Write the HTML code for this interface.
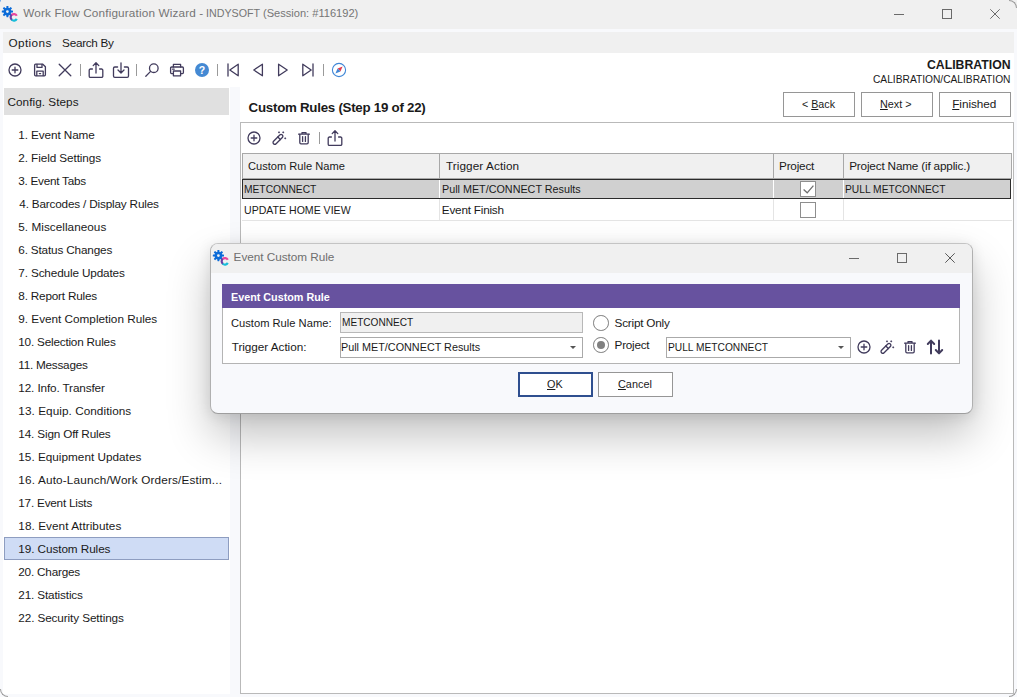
<!DOCTYPE html>
<html lang="en"><head><meta charset="utf-8"><title>Work Flow Configuration Wizard - INDYSOFT</title>
<style>
html,body{margin:0;padding:0}
body{width:1017px;height:697px;position:relative;overflow:hidden;background:#f8f9fc;font-family:"Liberation Sans",sans-serif;color:#1a1a1a}
.g{position:absolute;left:0;top:0;width:0;height:0}
.t{position:absolute;height:20px;line-height:20px;white-space:nowrap;transform-origin:0 0}
.t u{text-decoration:underline;text-underline-offset:1px}
.ic{position:absolute;overflow:visible}
.titlebar{position:absolute;left:0;top:0;width:1017px;height:29px;background:#f0f0f0}
.corner-art{position:absolute;left:-6px;top:-8px;width:7px;height:12px;border-radius:50%;background:#3f8fe8}
.menubar{position:absolute;left:3px;top:32px;width:1011px;height:21px;background:#f0f0f0}
.client{position:absolute;left:3px;top:53px;width:1011px;height:641px;background:#fff}
.crn{position:absolute;width:8px;height:8px;box-sizing:border-box;border:0 solid #9c9c9c}
.crn.tr{right:0;top:0;border-top-width:1px;border-right-width:1px;border-top-right-radius:8px}
.crn.bl{left:0;bottom:0;border-bottom-width:1px;border-left-width:1px;border-bottom-left-radius:8px}
.crn.br{right:0;bottom:0;border-bottom-width:1px;border-right-width:1px;border-bottom-right-radius:8px}
.sep{position:absolute;width:1px;height:12px;background:#9a9a9a}
.cfg{position:absolute;left:4px;top:88px;width:225px;height:27px;background:#e0e0e0}
.sel{position:absolute;left:4px;top:537px;width:225px;height:23px;box-sizing:border-box;background:#cfdcf5;border:1px solid #8e9dc0}
.split{position:absolute;left:230px;top:87px;width:10px;height:607px;background:#f8f9fc}
.btn{position:absolute;box-sizing:border-box;background:#fff;border:1px solid #969696}
.btn.ok{border:2px solid #2f4f8f}
.panel{position:absolute;left:240px;top:122px;width:774px;height:572px;box-sizing:border-box;background:#fff;border:1px solid #b9b9b9}
.ghead{position:absolute;left:242px;top:153px;width:770px;height:26px;box-sizing:border-box;background:#f0f0f0;border:1px solid #a8a8a8}
.gsep{position:absolute;top:154px;width:1px;height:24px;background:#a8a8a8}
.row1{position:absolute;left:242px;top:179px;width:769px;height:20px;background:#d0d0d0}
.row1b{position:absolute;left:242px;top:179px;width:769px;height:20px;box-sizing:border-box;border:1px solid #2b2b2b}
.row2{position:absolute;left:242px;top:199px;width:770px;height:22px;box-sizing:border-box;border-bottom:1px solid #e4e4e4;background:#fff}
.csep{position:absolute;width:1px;background:#e4e4e4}
.chk{position:absolute;width:15.6px;height:15.4px;box-sizing:border-box;border:1.2px solid #8e8e8e;background:#fff}
.chk svg{position:absolute;left:0;top:0}
.dlg{position:absolute;left:210px;top:243px;width:763px;height:171px;box-sizing:border-box;border-radius:8px;background:#f8f9fc;border:1px solid #b0b0b0;border-top-color:#c4c4c4;border-bottom-color:#9e9e9e;box-shadow:0 22px 44px rgba(0,0,0,.24),0 2px 14px rgba(0,0,0,.10);overflow:hidden}
.dtitle{position:absolute;left:0;top:0;width:100%;height:29px;background:#f0f0f0}
.dbox{position:absolute;left:222px;top:284px;width:738px;height:80px;box-sizing:border-box;background:#fff;border:1px solid #b4b4b4}
.dhead{position:absolute;left:222px;top:284px;width:738px;height:24px;background:#67529f}
.inp{position:absolute;height:21px;box-sizing:border-box;background:#fff;border:1px solid #aaa}
.inp.dis{background:#f0f0f0;border-color:#b8b8b8}
.dd{position:absolute;width:0;height:0;border-left:3.5px solid transparent;border-right:3.5px solid transparent;border-top:3.5px solid #555}
.radio{position:absolute;width:15.6px;height:15.6px;box-sizing:border-box;border:1px solid #7d7d7d;border-radius:50%;background:#fff}
.radio i{position:absolute;left:2.6px;top:2.6px;width:8.4px;height:8.4px;border-radius:50%;background:#808080}
</style></head>
<body>
<div class="g window-titlebar">
<div class="titlebar"></div>
<div class="corner-art"></div>
<svg class="ic" style="left:1px;top:2px" width="17" height="22" viewBox="0 0 17 22"><g transform="translate(6.4,9.6)" fill="#0b6bd8"><rect x="-1" y="-5.6" width="2" height="2.4" rx=".4" transform="rotate(0)"/><rect x="-1" y="-5.6" width="2" height="2.4" rx=".4" transform="rotate(45)"/><rect x="-1" y="-5.6" width="2" height="2.4" rx=".4" transform="rotate(90)"/><rect x="-1" y="-5.6" width="2" height="2.4" rx=".4" transform="rotate(135)"/><rect x="-1" y="-5.6" width="2" height="2.4" rx=".4" transform="rotate(180)"/><rect x="-1" y="-5.6" width="2" height="2.4" rx=".4" transform="rotate(225)"/><rect x="-1" y="-5.6" width="2" height="2.4" rx=".4" transform="rotate(270)"/><rect x="-1" y="-5.6" width="2" height="2.4" rx=".4" transform="rotate(315)"/><path d="M0-3.9a3.9 3.9 0 1 0 0 7.8a3.9 3.9 0 1 0 0-7.8zM0-1.4a1.4 1.4 0 1 1 0 2.8a1.4 1.4 0 1 1 0-2.8z" fill-rule="evenodd"/></g><g fill="none" stroke-width="2.2"><path d="M11.04 12.69A3.25 3.25 0 0 0 11.04 18.01" stroke="#6a3fa5"/><path d="M15.77 13.82A3.25 3.25 0 0 0 10.73 12.93" stroke="#e9479c"/><path d="M10.73 17.77A3.25 3.25 0 0 0 15.77 16.88" stroke="#19bdd9"/></g></svg>
<span class="t" style="left:23.2px;top:2.9px;font-size:11.75px;color:#757575;letter-spacing:0.15px;">Work Flow Configuration Wizard -</span><span class="t" style="left:205.8px;top:2.9px;font-size:11.75px;color:#757575;transform:scaleX(0.910);">INDYSOFT</span><span class="t" style="left:263.3px;top:2.9px;font-size:11.75px;color:#757575;transform:scaleX(0.943);">(Session: #116192)</span>
<svg class="ic" style="left:894px;top:8.5px" width="10" height="10" viewBox="0 0 10 10"><path d="M0 5.5h10" stroke="#6a6a6a" fill="none"/></svg>
<svg class="ic" style="left:942px;top:9px" width="10" height="10" viewBox="0 0 10 10"><rect x="0.5" y="0.5" width="9" height="9" stroke="#6a6a6a" fill="none"/></svg>
<svg class="ic" style="left:990px;top:9px" width="10" height="10" viewBox="0 0 10 10"><path d="M0.3 0.3l9.4 9.4M9.7 0.3l-9.4 9.4" stroke="#6a6a6a" fill="none" stroke-width="1"/></svg>
</div>
<div class="g menu" role="menubar">
<div class="menubar"></div><span class="t" style="left:8.4px;top:32.9px;font-size:11.75px;letter-spacing:0.42px;">Options</span><span class="t" style="left:62.1px;top:32.9px;font-size:11.75px;letter-spacing:-0.29px;">Search By</span>
</div>
<div class="client"></div>
<div class="crn tr"></div><div class="crn bl"></div><div class="crn br"></div>
<div class="g main-toolbar" role="toolbar">
<svg class="ic" style="left:7.2px;top:62px" width="16" height="16" viewBox="0 0 16 16"><g fill="none" stroke="#413b5c" stroke-width="1.3" stroke-linecap="round" stroke-linejoin="round"><circle cx="8" cy="8" r="6"/><path d="M8 5.2v5.6M5.2 8h5.6"/></g></svg><svg class="ic" style="left:32px;top:62px" width="16" height="16" viewBox="0 0 16 16"><g fill="none" stroke="#413b5c" stroke-width="1.3" stroke-linecap="round" stroke-linejoin="round"><path d="M2.6 3.2a1 1 0 0 1 1-1h7.2l2.6 2.6v8a1 1 0 0 1-1 1H3.6a1 1 0 0 1-1-1z"/><path d="M5 2.4v3h5v-3M4.8 13.6V9.2h6.4v4.4"/><path d="M7.4 11.6h1.2"/></g></svg><svg class="ic" style="left:57px;top:62px" width="16" height="16" viewBox="0 0 16 16"><g fill="none" stroke="#413b5c" stroke-width="1.3" stroke-linecap="round" stroke-linejoin="round"><path d="M2.2 2.2l11.6 11.6M13.8 2.2L2.2 13.8"/></g></svg><div class="sep" style="left:80px;top:64px"></div><svg class="ic" style="left:87px;top:60.5px" width="18" height="18" viewBox="0 0 18 18"><g fill="none" stroke="#413b5c" stroke-width="1.3" stroke-linecap="round" stroke-linejoin="round" stroke-width="1.4"><path d="M5.4 8H3.4a1.2 1.2 0 0 0-1.2 1.2v6a1.2 1.2 0 0 0 1.2 1.2h11.2a1.2 1.2 0 0 0 1.2-1.2v-6a1.2 1.2 0 0 0-1.2-1.2h-2"/><path d="M9 12V2M6.2 4.6L9 1.8l2.8 2.8"/></g></svg><svg class="ic" style="left:112px;top:60.5px" width="18" height="18" viewBox="0 0 18 18"><g fill="none" stroke="#413b5c" stroke-width="1.3" stroke-linecap="round" stroke-linejoin="round" stroke-width="1.4"><path d="M5.6 6H2.8a1.3 1.3 0 0 0-1.3 1.3v7.8a1.3 1.3 0 0 0 1.3 1.3h12.4a1.3 1.3 0 0 0 1.3-1.3V7.3a1.3 1.3 0 0 0-1.3-1.3h-2.8"/><path d="M9 1.8V11.6M6 9l3 3 3-3"/></g></svg><div class="sep" style="left:136px;top:64px"></div><svg class="ic" style="left:144px;top:62px" width="16" height="16" viewBox="0 0 16 16"><g fill="none" stroke="#413b5c" stroke-width="1.3" stroke-linecap="round" stroke-linejoin="round" stroke-width="1.4"><circle cx="9.8" cy="6.2" r="4.3"/><path d="M6.6 9.4L1.8 14.2"/></g></svg><svg class="ic" style="left:169px;top:62px" width="16" height="16" viewBox="0 0 16 16"><g fill="none" stroke="#413b5c" stroke-width="1.3" stroke-linecap="round" stroke-linejoin="round"><path d="M4.4 5V2.4h7.2V5"/><path d="M4.2 11.6H2.6a1 1 0 0 1-1-1V6a1 1 0 0 1 1-1h10.8a1 1 0 0 1 1 1v4.6a1 1 0 0 1-1 1h-1.6"/><path d="M4.4 9h7.2v4.8H4.4zM3.6 7.2h1.6"/></g></svg><svg class="ic" style="left:194px;top:62px" width="16" height="16" viewBox="0 0 16 16"><circle cx="8" cy="8" r="7" fill="#4489d3"/><text x="8" y="12" text-anchor="middle" font-family="Liberation Sans, sans-serif" font-size="10.5" font-weight="700" fill="#fff">?</text></svg><div class="sep" style="left:217px;top:64px"></div><svg class="ic" style="left:225px;top:62px" width="16" height="16" viewBox="0 0 16 16"><g fill="none" stroke="#413b5c" stroke-width="1.3" stroke-linecap="round" stroke-linejoin="round" stroke-width="1.4"><path d="M3 2v12"/><path d="M13.2 2.2v11.6L4.8 8z"/></g></svg><svg class="ic" style="left:250px;top:62px" width="16" height="16" viewBox="0 0 16 16"><g fill="none" stroke="#413b5c" stroke-width="1.3" stroke-linecap="round" stroke-linejoin="round" stroke-width="1.4"><path d="M12.4 2.2v11.6L3.8 8z"/></g></svg><svg class="ic" style="left:275px;top:62px" width="16" height="16" viewBox="0 0 16 16"><g fill="none" stroke="#413b5c" stroke-width="1.3" stroke-linecap="round" stroke-linejoin="round" stroke-width="1.4"><path d="M3.6 2.2v11.6L12.2 8z"/></g></svg><svg class="ic" style="left:300px;top:62px" width="16" height="16" viewBox="0 0 16 16"><g fill="none" stroke="#413b5c" stroke-width="1.3" stroke-linecap="round" stroke-linejoin="round" stroke-width="1.4"><path d="M13 2v12"/><path d="M2.8 2.2v11.6L11.2 8z"/></g></svg><div class="sep" style="left:323px;top:64px"></div><svg class="ic" style="left:331px;top:62px" width="16" height="16" viewBox="0 0 16 16"><circle cx="8" cy="8" r="6.6" fill="#fff" stroke="#3f86d6" stroke-width="1.1"/><path d="M11.6 4.4L6.6 6.6 9.4 9.4z" fill="#e03a4e"/><path d="M4.4 11.6l5-2.2L6.6 6.6z" fill="#3f86d6"/></svg>
</div>
<div class="g context-label">
<span class="t" style="left:927.3px;top:54.8px;font-size:13.33px;font-weight:700;transform:scaleX(0.920);">CALIBRATION</span><span class="t" style="left:872.7px;top:68.9px;font-size:11.75px;transform:scaleX(0.869);">CALIBRATION/CALIBRATION</span>
</div>
<div class="g sidebar" role="navigation">
<div class="cfg"></div><span class="t" style="left:7.5px;top:91.6px;font-size:11.75px;letter-spacing:0.04px;">Config. Steps</span>
<div class="sel"></div>
<span class="t" style="left:18.3px;top:125.0px;font-size:11.75px;letter-spacing:-0.10px;">1. Event Name</span>
<span class="t" style="left:18.3px;top:148.0px;font-size:11.75px;letter-spacing:-0.09px;">2. Field Settings</span>
<span class="t" style="left:18.3px;top:171.0px;font-size:11.75px;letter-spacing:-0.27px;">3. Event Tabs</span>
<span class="t" style="left:19.3px;top:194.0px;font-size:11.75px;letter-spacing:-0.18px;">4. Barcodes / Display Rules</span>
<span class="t" style="left:18.3px;top:217.0px;font-size:11.75px;letter-spacing:0.03px;">5. Miscellaneous</span>
<span class="t" style="left:18.3px;top:240.0px;font-size:11.75px;letter-spacing:-0.17px;">6. Status Changes</span>
<span class="t" style="left:18.3px;top:263.0px;font-size:11.75px;letter-spacing:-0.14px;">7. Schedule Updates</span>
<span class="t" style="left:18.3px;top:286.0px;font-size:11.75px;letter-spacing:-0.20px;">8. Report Rules</span>
<span class="t" style="left:18.3px;top:309.0px;font-size:11.75px;letter-spacing:-0.01px;">9. Event Completion Rules</span>
<span class="t" style="left:18.3px;top:332.0px;font-size:11.75px;letter-spacing:-0.21px;">10. Selection Rules</span>
<span class="t" style="left:18.3px;top:355.0px;font-size:11.75px;letter-spacing:-0.25px;">11. Messages</span>
<span class="t" style="left:18.3px;top:378.0px;font-size:11.75px;letter-spacing:-0.13px;">12. Info. Transfer</span>
<span class="t" style="left:18.3px;top:401.0px;font-size:11.75px;letter-spacing:0.06px;">13. Equip. Conditions</span>
<span class="t" style="left:18.3px;top:424.0px;font-size:11.75px;letter-spacing:-0.16px;">14. Sign Off Rules</span>
<span class="t" style="left:18.3px;top:447.0px;font-size:11.75px;letter-spacing:0.01px;">15. Equipment Updates</span>
<span class="t" style="left:18.3px;top:470.0px;font-size:11.75px;letter-spacing:0.17px;">16. Auto-Launch/Work Orders/Estim...</span>
<span class="t" style="left:18.3px;top:493.0px;font-size:11.75px;letter-spacing:-0.22px;">17. Event Lists</span>
<span class="t" style="left:18.3px;top:516.0px;font-size:11.75px;letter-spacing:0.06px;">18. Event Attributes</span>
<span class="t" style="left:18.3px;top:539.0px;font-size:11.75px;letter-spacing:-0.08px;">19. Custom Rules</span>
<span class="t" style="left:18.3px;top:562.0px;font-size:11.75px;letter-spacing:-0.21px;">20. Charges</span>
<span class="t" style="left:18.3px;top:585.0px;font-size:11.75px;letter-spacing:-0.15px;">21. Statistics</span>
<span class="t" style="left:18.3px;top:608.0px;font-size:11.75px;letter-spacing:-0.11px;">22. Security Settings</span>
</div>
<div class="split"></div>
<div class="g step-panel" role="main">
<span class="t" style="left:248.6px;top:97.8px;font-size:13.33px;font-weight:700;letter-spacing:-0.27px;">Custom Rules (Step 19 of 22)</span>
<div class="btn" style="left:783px;top:92px;width:72px;height:25px"></div><span class="t" style="left:802.3px;top:94.0px;font-size:11.75px;transform:scaleX(0.910);">&lt; <u>B</u>ack</span>
<div class="btn" style="left:861px;top:92px;width:72px;height:25px"></div><span class="t" style="left:879.8px;top:94.0px;font-size:11.75px;transform:scaleX(0.922);"><u>N</u>ext &gt;</span>
<div class="btn" style="left:939px;top:92px;width:72px;height:25px"></div><span class="t" style="left:952.2px;top:94.0px;font-size:11.75px;letter-spacing:-0.03px;"><u>F</u>inished</span>
<div class="panel"></div>
<svg class="ic" style="left:246px;top:130px" width="16" height="16" viewBox="0 0 16 16"><g fill="none" stroke="#413b5c" stroke-width="1.3" stroke-linecap="round" stroke-linejoin="round"><circle cx="8" cy="8" r="6"/><path d="M8 5.2v5.6M5.2 8h5.6"/></g></svg><svg class="ic" style="left:270.6px;top:130px" width="16" height="16" viewBox="0 0 16 16"><g fill="none" stroke="#413b5c" stroke-width="1.3" stroke-linecap="round" stroke-linejoin="round"><g transform="translate(6.95,9.35) rotate(45)"><rect x="-1.8" y="-6.2" width="3.6" height="12.4" rx="1.8"/><path d="M-1.8 -1.6h3.6"/></g></g><g fill="#413b5c"><path d="M8.0 1.15l1.15 1.15-1.15 1.15-1.15-1.15z"/><path d="M12.2 1.15l1.15 1.15-1.15 1.15-1.15-1.15z"/><path d="M14.2 7.15l1.15 1.15-1.15 1.15-1.15-1.15z"/></g></svg><svg class="ic" style="left:296px;top:130px" width="16" height="16" viewBox="0 0 16 16"><g fill="none" stroke="#413b5c" stroke-width="1.3" stroke-linecap="round" stroke-linejoin="round" stroke-width="1.45"><path d="M2.6 4.2h10.8M6 4V2.6h4V4"/><path d="M3.8 4.4v8.2a1.2 1.2 0 0 0 1.2 1.2h6a1.2 1.2 0 0 0 1.2-1.2V4.4"/><path d="M6.6 6.6v4.8M9.4 6.6v4.8"/></g></svg><div class="sep" style="left:319px;top:132px"></div><svg class="ic" style="left:326px;top:128.5px" width="18" height="18" viewBox="0 0 18 18"><g fill="none" stroke="#413b5c" stroke-width="1.3" stroke-linecap="round" stroke-linejoin="round" stroke-width="1.4"><path d="M5.4 8H3.4a1.2 1.2 0 0 0-1.2 1.2v6a1.2 1.2 0 0 0 1.2 1.2h11.2a1.2 1.2 0 0 0 1.2-1.2v-6a1.2 1.2 0 0 0-1.2-1.2h-2"/><path d="M9 12V2M6.2 4.6L9 1.8l2.8 2.8"/></g></svg>
<div class="ghead"></div>
<div class="gsep" style="left:439px"></div>
<div class="gsep" style="left:773px"></div>
<div class="gsep" style="left:843px"></div>
<span class="t" style="left:248.4px;top:156.0px;font-size:11.75px;transform:scaleX(0.945);">Custom Rule Name</span><span class="t" style="left:445.9px;top:156.0px;font-size:11.75px;letter-spacing:0.09px;">Trigger Action</span><span class="t" style="left:779.0px;top:156.0px;font-size:11.75px;letter-spacing:-0.20px;">Project</span><span class="t" style="left:849.2px;top:156.0px;font-size:11.75px;letter-spacing:-0.18px;">Project Name (if applic.)</span>
<div class="row1"></div><div class="row2"></div>
<div class="csep" style="left:439px;top:179px;height:20px;background:#fff"></div><div class="csep" style="left:439px;top:199px;height:21px"></div>
<div class="csep" style="left:773px;top:179px;height:20px;background:#fff"></div><div class="csep" style="left:773px;top:199px;height:21px"></div>
<div class="csep" style="left:843px;top:179px;height:20px;background:#fff"></div><div class="csep" style="left:843px;top:199px;height:21px"></div>
<div class="row1b"></div>
<span class="t" style="left:243.5px;top:179.0px;font-size:11.75px;transform:scaleX(0.872);">METCONNECT</span><span class="t" style="left:441.8px;top:179.0px;font-size:11.75px;transform:scaleX(0.917);">Pull MET/CONNECT Results</span><span class="t" style="left:845.4px;top:179.0px;font-size:11.75px;transform:scaleX(0.872);">PULL METCONNECT</span><span class="t" style="left:243.5px;top:200.0px;font-size:11.75px;transform:scaleX(0.899);">UPDATE HOME VIEW</span><span class="t" style="left:441.8px;top:200.0px;font-size:11.75px;letter-spacing:-0.22px;">Event Finish</span>
<div class="chk" style="left:800.3px;top:181.4px"><svg width="15" height="15" viewBox="0 0 15 15"><path d="M2.6 7.6l3.6 3.2 6.2-7.2" fill="none" stroke="#6e6e6e" stroke-width="1.3"/></svg></div><div class="chk" style="left:800.3px;top:202.2px"></div>
</div>
<div class="g dialog" role="dialog">
<div class="dlg"><div class="dtitle"></div></div>
<svg class="ic" style="left:212.1px;top:246.2px" width="17" height="22" viewBox="0 0 17 22"><g transform="translate(6.4,9.6)" fill="#0b6bd8"><rect x="-1" y="-5.6" width="2" height="2.4" rx=".4" transform="rotate(0)"/><rect x="-1" y="-5.6" width="2" height="2.4" rx=".4" transform="rotate(45)"/><rect x="-1" y="-5.6" width="2" height="2.4" rx=".4" transform="rotate(90)"/><rect x="-1" y="-5.6" width="2" height="2.4" rx=".4" transform="rotate(135)"/><rect x="-1" y="-5.6" width="2" height="2.4" rx=".4" transform="rotate(180)"/><rect x="-1" y="-5.6" width="2" height="2.4" rx=".4" transform="rotate(225)"/><rect x="-1" y="-5.6" width="2" height="2.4" rx=".4" transform="rotate(270)"/><rect x="-1" y="-5.6" width="2" height="2.4" rx=".4" transform="rotate(315)"/><path d="M0-3.9a3.9 3.9 0 1 0 0 7.8a3.9 3.9 0 1 0 0-7.8zM0-1.4a1.4 1.4 0 1 1 0 2.8a1.4 1.4 0 1 1 0-2.8z" fill-rule="evenodd"/></g><g fill="none" stroke-width="2.2"><path d="M11.04 12.69A3.25 3.25 0 0 0 11.04 18.01" stroke="#6a3fa5"/><path d="M15.77 13.82A3.25 3.25 0 0 0 10.73 12.93" stroke="#e9479c"/><path d="M10.73 17.77A3.25 3.25 0 0 0 15.77 16.88" stroke="#19bdd9"/></g></svg><span class="t" style="left:233.6px;top:247.0px;font-size:11.75px;color:#6e6e6e;letter-spacing:-0.03px;">Event Custom Rule</span>
<svg class="ic" style="left:849px;top:252.5px" width="10" height="10" viewBox="0 0 10 10"><path d="M0 5.5h10" stroke="#6a6a6a" fill="none"/></svg><svg class="ic" style="left:897px;top:253px" width="10" height="10" viewBox="0 0 10 10"><rect x="0.5" y="0.5" width="9" height="9" stroke="#6a6a6a" fill="none"/></svg><svg class="ic" style="left:945px;top:253px" width="10" height="10" viewBox="0 0 10 10"><path d="M0.3 0.3l9.4 9.4M9.7 0.3l-9.4 9.4" stroke="#5a5a5a" fill="none" stroke-width="1"/></svg>
<div class="dbox"></div><div class="dhead"></div><span class="t" style="left:231.4px;top:286.5px;font-size:11.75px;font-weight:700;color:#ffffff;transform:scaleX(0.917);">Event Custom Rule</span>
<span class="t" style="left:230.7px;top:313.0px;font-size:11.75px;transform:scaleX(0.950);">Custom Rule Name:</span><span class="t" style="left:231.7px;top:337.3px;font-size:11.75px;letter-spacing:-0.04px;">Trigger Action:</span>
<div class="inp dis" style="left:340px;top:312px;width:243px"></div><span class="t" style="left:341.5px;top:312.2px;font-size:11.75px;transform:scaleX(0.859);">METCONNECT</span>
<div class="inp" style="left:340px;top:337px;width:243px"></div><span class="t" style="left:341.4px;top:336.6px;font-size:11.75px;transform:scaleX(0.920);">Pull MET/CONNECT Results</span><div class="dd" style="left:569.8px;top:345.6px"></div>
<div class="radio" style="left:593px;top:315px"></div><div class="radio" style="left:593px;top:337.2px"><i></i></div><span class="t" style="left:614.6px;top:313.0px;font-size:11.75px;letter-spacing:-0.22px;">Script Only</span><span class="t" style="left:614.6px;top:335.0px;font-size:11.75px;letter-spacing:-0.27px;">Project</span>
<div class="inp" style="left:666px;top:337px;width:185px"></div><span class="t" style="left:667.5px;top:336.6px;font-size:11.75px;transform:scaleX(0.869);">PULL METCONNECT</span><div class="dd" style="left:837.8px;top:345.6px"></div>
<svg class="ic" style="left:855.7px;top:339px" width="16" height="16" viewBox="0 0 16 16"><g fill="none" stroke="#413b5c" stroke-width="1.3" stroke-linecap="round" stroke-linejoin="round"><circle cx="8" cy="8" r="6"/><path d="M8 5.2v5.6M5.2 8h5.6"/></g></svg><svg class="ic" style="left:878.9px;top:339px" width="16" height="16" viewBox="0 0 16 16"><g fill="none" stroke="#413b5c" stroke-width="1.3" stroke-linecap="round" stroke-linejoin="round"><g transform="translate(6.95,9.35) rotate(45)"><rect x="-1.8" y="-6.2" width="3.6" height="12.4" rx="1.8"/><path d="M-1.8 -1.6h3.6"/></g></g><g fill="#413b5c"><path d="M8.0 1.15l1.15 1.15-1.15 1.15-1.15-1.15z"/><path d="M12.2 1.15l1.15 1.15-1.15 1.15-1.15-1.15z"/><path d="M14.2 7.15l1.15 1.15-1.15 1.15-1.15-1.15z"/></g></svg><svg class="ic" style="left:902px;top:339px" width="16" height="16" viewBox="0 0 16 16"><g fill="none" stroke="#413b5c" stroke-width="1.3" stroke-linecap="round" stroke-linejoin="round" stroke-width="1.45"><path d="M2.6 4.2h10.8M6 4V2.6h4V4"/><path d="M3.8 4.4v8.2a1.2 1.2 0 0 0 1.2 1.2h6a1.2 1.2 0 0 0 1.2-1.2V4.4"/><path d="M6.6 6.6v4.8M9.4 6.6v4.8"/></g></svg><svg class="ic" style="left:926px;top:338px" width="18" height="18" viewBox="0 0 18 18"><g fill="none" stroke="#413b5c" stroke-width="2" stroke-linecap="round" stroke-linejoin="round"><path d="M5 15.6V2.8M1.8 6L5 2.6 8.2 6"/><path d="M13 2.4v12.8M9.8 12L13 15.4 16.2 12"/></g></svg>
<div class="btn ok" style="left:518px;top:372px;width:75px;height:25px"></div><span class="t" style="left:547.2px;top:373.8px;font-size:11.75px;transform:scaleX(0.919);"><u>O</u>K</span>
<div class="btn" style="left:598px;top:372px;width:75px;height:25px"></div><span class="t" style="left:618.3px;top:373.8px;font-size:11.75px;transform:scaleX(0.926);"><u>C</u>ancel</span>
</div>
</body></html>
